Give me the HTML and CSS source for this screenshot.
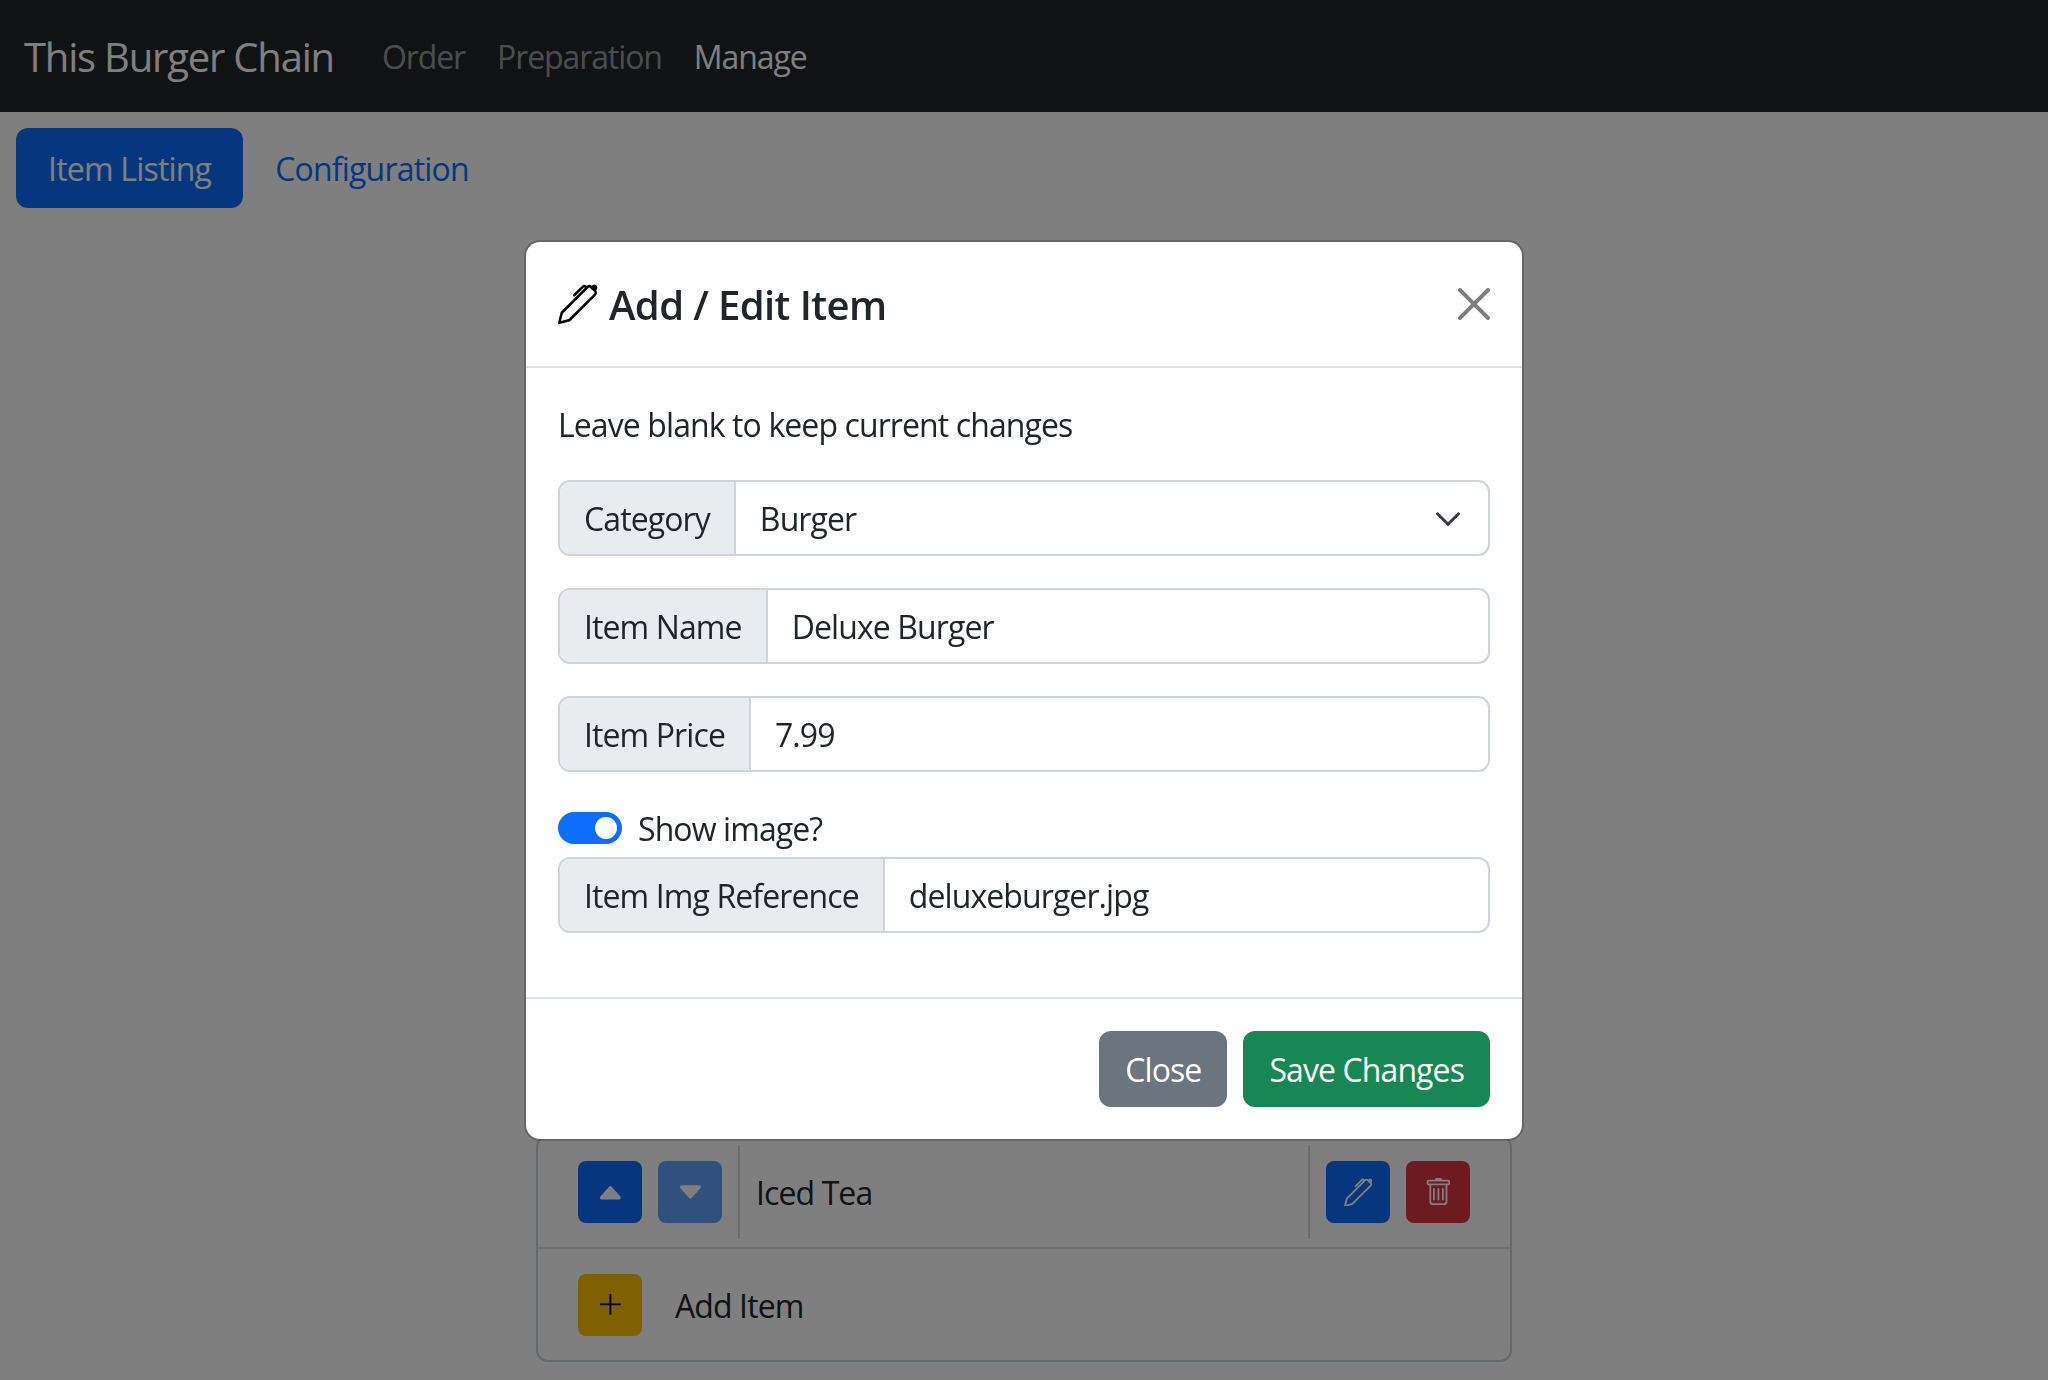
FILE: index.html
```html
<!DOCTYPE html>
<html lang="en">
<head>
    <meta charset="utf-8">
    <title>This Burger Chain</title>
    <link rel="stylesheet" href="styles.css">
</head>
<body>
    <nav class="navbar">
        <a class="brand">This Burger Chain</a>
        <a class="nav_link">Order</a>
        <a class="nav_link">Preparation</a>
        <a class="nav_link active">Manage</a>
    </nav>
    <div class="tabs">
        <a class="tab active">Item Listing</a>
        <a class="tab">Configuration</a>
    </div>
    <div class="list_card">
        <div class="list_row">
            <button class="icon_btn blue">
                <svg viewBox="0 0 16 16"><path d="m7.247 4.86-4.796 5.481c-.566.647-.106 1.659.753 1.659h9.592a1 1 0 0 0 .753-1.659l-4.796-5.48a1 1 0 0 0-1.506 0z"/></svg>
            </button>
            <button class="icon_btn blue faded">
                <svg viewBox="0 0 16 16"><path d="M7.247 11.14 2.451 5.658C1.885 5.013 2.345 4 3.204 4h9.592a1 1 0 0 1 .753 1.659l-4.796 5.48a1 1 0 0 1-1.506 0z"/></svg>
            </button>
            <span class="row_name">Iced Tea</span>
            <button class="icon_btn blue">
                <svg viewBox="0 0 16 16"><path d="m13.498.795.149-.149a1.207 1.207 0 1 1 1.707 1.708l-.149.148a1.5 1.5 0 0 1-.059 2.059L4.854 14.854a.5.5 0 0 1-.233.131l-4 1a.5.5 0 0 1-.606-.606l1-4a.5.5 0 0 1 .131-.232l9.642-9.642a.5.5 0 0 0-.642.056L6.854 4.854a.5.5 0 1 1-.708-.708L9.44.854A1.5 1.5 0 0 1 11.5.796a1.5 1.5 0 0 1 1.998-.001zm-.644.766a.5.5 0 0 0-.707 0L1.95 11.756l-.764 3.057 3.057-.764L14.44 3.854a.5.5 0 0 0 0-.708l-1.585-1.585z"/></svg>
            </button>
            <button class="icon_btn red">
                <svg viewBox="0 0 16 16"><path d="M5.5 5.5A.5.5 0 0 1 6 6v6a.5.5 0 0 1-1 0V6a.5.5 0 0 1 .5-.5zm2.5 0a.5.5 0 0 1 .5.5v6a.5.5 0 0 1-1 0V6a.5.5 0 0 1 .5-.5zm3 .5a.5.5 0 0 0-1 0v6a.5.5 0 0 0 1 0V6z"/><path fill-rule="evenodd" d="M14.5 3a1 1 0 0 1-1 1H13v9a2 2 0 0 1-2 2H5a2 2 0 0 1-2-2V4h-.5a1 1 0 0 1-1-1V2a1 1 0 0 1 1-1H6a1 1 0 0 1 1-1h2a1 1 0 0 1 1 1h3.5a1 1 0 0 1 1 1v1zM4.118 4 4 4.059V13a1 1 0 0 0 1 1h6a1 1 0 0 0 1-1V4.059L11.882 4H4.118zM2.5 3V2h11v1h-11z"/></svg>
            </button>
        </div>
        <div class="list_row add_row">
            <button class="icon_btn yellow">
                <svg class="plus_icon" viewBox="0 0 16 16"><path d="M2.2 8h11.6M8 2.2v11.6"/></svg>
            </button>
            <span class="add_name">Add Item</span>
        </div>
    </div>

    <div class="backdrop"></div>
    <div class="modal">
        <div class="modal_header">
            <svg class="title_icon" viewBox="0 0 16 16"><path d="m13.498.795.149-.149a1.207 1.207 0 1 1 1.707 1.708l-.149.148a1.5 1.5 0 0 1-.059 2.059L4.854 14.854a.5.5 0 0 1-.233.131l-4 1a.5.5 0 0 1-.606-.606l1-4a.5.5 0 0 1 .131-.232l9.642-9.642a.5.5 0 0 0-.642.056L6.854 4.854a.5.5 0 1 1-.708-.708L9.44.854A1.5 1.5 0 0 1 11.5.796a1.5 1.5 0 0 1 1.998-.001zm-.644.766a.5.5 0 0 0-.707 0L1.95 11.756l-.764 3.057 3.057-.764L14.44 3.854a.5.5 0 0 0 0-.708l-1.585-1.585z"/></svg>
            <h5>Add / Edit Item</h5>
            <svg class="close_icon" viewBox="0 0 16 16"><path d="M.293.293a1 1 0 0 1 1.414 0L8 6.586 14.293.293a1 1 0 1 1 1.414 1.414L9.414 8l6.293 6.293a1 1 0 0 1-1.414 1.414L8 9.414l-6.293 6.293a1 1 0 0 1-1.414-1.414L6.586 8 .293 1.707a1 1 0 0 1 0-1.414z"/></svg>
        </div>
        <div class="modal_body">
            <p class="hint">Leave blank to keep current changes</p>
            <div class="input_group">
                <span class="group_label">Category</span>
                <div class="group_value select">
                    Burger
                    <svg class="chevron" viewBox="0 0 16 16"><path fill="none" stroke="#343a40" stroke-linecap="round" stroke-linejoin="round" stroke-width="1.7" d="m2 5 6 6 6-6"/></svg>
                </div>
            </div>
            <div class="input_group">
                <span class="group_label">Item Name</span>
                <div class="group_value">Deluxe Burger</div>
            </div>
            <div class="input_group">
                <span class="group_label">Item Price</span>
                <div class="group_value">7.99</div>
            </div>
            <div class="switch_row">
                <span class="switch"></span>
                <span class="switch_text">Show image?</span>
            </div>
            <div class="input_group last">
                <span class="group_label">Item Img Reference</span>
                <div class="group_value">deluxeburger.jpg</div>
            </div>
        </div>
        <div class="modal_footer">
            <button class="btn gray">Close</button>
            <button class="btn green">Save Changes</button>
        </div>
    </div>
</body>
</html>
```

FILE: styles.css
```css
html, body {
    height: 100%;
}
body {
    margin: 0;
    background-color: #fff;
    color: #212529;
    font-family: "Open Sans", "Noto Sans", sans-serif;
    font-size: 32px;
    letter-spacing: -0.9px;
    line-height: 48px;
    overflow: hidden;
}
button {
    font: inherit;
    letter-spacing: inherit;
    border: none;
    cursor: pointer;
}

/* navbar */
.navbar {
    background-color: #212529;
    height: 112px;
    display: flex;
    align-items: center;
    padding-left: 24px;
}
.brand {
    color: #fff;
    font-size: 40px;
    letter-spacing: -1.2px;
    margin-right: 32px;
    padding-top: 2px;
}
.nav_link {
    color: rgba(255, 255, 255, 0.55);
    letter-spacing: -1.1px;
    padding: 2px 16px 0;
}
.nav_link.active {
    color: #fff;
}

/* tabs */
.tabs {
    display: flex;
    padding: 16px 16px 0;
}
.tab {
    padding: 17px 32px 15px;
    color: #0d6efd;
    letter-spacing: -0.8px;
    border-radius: 12px;
}
.tab.active {
    background-color: #0d6efd;
    color: #fff;
}

/* list under the modal */
.list_card {
    width: 976px;
    box-sizing: border-box;
    margin: 927px auto 0;
    border: 2px solid #ced4da;
    border-radius: 12px;
}
.list_row {
    display: flex;
    align-items: center;
    gap: 16px;
    padding: 0 40px;
    height: 110px;
}
.row_name {
    flex: 1;
    align-self: stretch;
    margin: 8px 0;
    padding: 2px 0 0 16px;
    display: flex;
    align-items: center;
    border-left: 2px solid #d9dcdf;
    border-right: 2px solid #d9dcdf;
}
.add_row {
    height: 111px;
    border-top: 2px solid #dee2e6;
}
.add_name {
    margin-left: 17px;
    padding-top: 2px;
}
.icon_btn {
    width: 64px;
    height: 62px;
    padding: 0;
    border-radius: 8px;
    display: flex;
    align-items: center;
    justify-content: center;
    flex-shrink: 0;
}
.icon_btn svg {
    width: 28.8px;
    height: 28.8px;
    fill: currentColor;
}
.icon_btn .plus_icon {
    fill: none;
    stroke: currentColor;
    stroke-width: 1;
}
.blue {
    background-color: #0d6efd;
    color: #fff;
}
.faded {
    opacity: 0.65;
}
.red {
    background-color: #dc3545;
    color: #fff;
}
.yellow {
    background-color: #ffc107;
    color: #000;
}

/* overlay */
.backdrop {
    position: fixed;
    inset: 0;
    background-color: rgba(0, 0, 0, 0.5);
}
.modal {
    position: fixed;
    left: 524px;
    top: 240px;
    width: 1000px;
    box-sizing: border-box;
    background-color: #fff;
    border: 2px solid rgba(0, 0, 0, 0.2);
    background-clip: padding-box;
    border-radius: 16px;
}
.modal_header {
    display: flex;
    align-items: center;
    height: 126px;
    box-sizing: border-box;
    padding: 0 32px;
    border-bottom: 2px solid #dee2e6;
}
.title_icon {
    width: 40px;
    height: 40px;
    margin-right: 11px;
}
.modal_header h5 {
    flex: 1;
    margin: 0;
    padding-top: 2px;
    font-size: 40px;
    font-weight: 600;
    letter-spacing: -0.6px;
    line-height: 60px;
}
.close_icon {
    width: 32px;
    height: 32px;
    opacity: 0.5;
}
.modal_body {
    padding: 33px 32px 64px;
}
.hint {
    margin: 0 0 31px;
}
.input_group {
    display: flex;
    height: 76px;
    box-sizing: border-box;
    margin-bottom: 32px;
    border: 2px solid #ced4da;
    border-radius: 12px;
    overflow: hidden;
}
.input_group.last {
    margin-bottom: 0;
}
.group_label {
    display: flex;
    align-items: center;
    padding: 2px 24px 0;
    background-color: #e9ecef;
    border-right: 2px solid #ced4da;
}
.group_value {
    flex: 1;
    display: flex;
    align-items: center;
    padding: 2px 24px 0;
}
.select {
    justify-content: space-between;
}
.chevron {
    width: 28px;
    height: 28px;
    margin-right: 2px;
}
.switch_row {
    display: flex;
    align-items: center;
    gap: 16px;
    height: 48px;
    margin-bottom: 5px;
}
.switch_text {
    padding-top: 2px;
}
.switch {
    width: 64px;
    height: 32px;
    border-radius: 16px;
    background-color: #0d6efd;
    position: relative;
}
.switch::after {
    content: "";
    position: absolute;
    right: 5px;
    top: 5px;
    width: 22px;
    height: 22px;
    border-radius: 50%;
    background-color: #fff;
}
.modal_footer {
    display: flex;
    justify-content: flex-end;
    gap: 16px;
    padding: 32px;
    border-top: 2px solid #dee2e6;
}
.btn {
    height: 76px;
    padding: 2px 26px 0;
    border-radius: 12px;
    color: #fff;
}
.gray {
    background-color: #6c757d;
}
.green {
    background-color: #198754;
}
```
